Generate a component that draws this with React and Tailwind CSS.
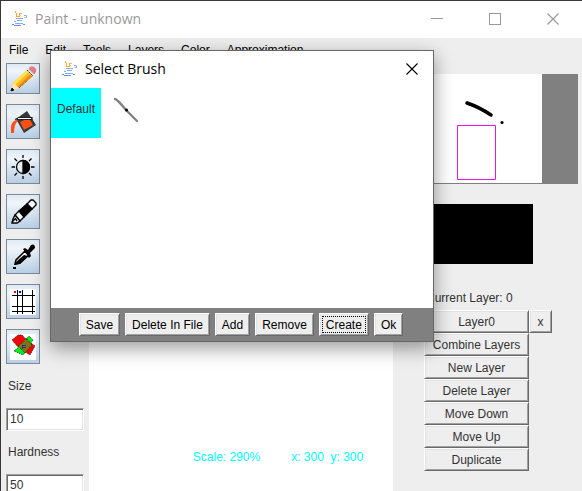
import React from "react";

function JavaIcon() {
  return (
    <svg width="16" height="17" viewBox="0 0 16 17" fill="none" aria-hidden="true">
      <path d="M3.500 1v2M4.500 3v4M7.500 3v3M4 6.500h4" stroke="#ffa53a" />
      <path d="M8 3.500h2M7 5.500h2" stroke="#ffb866" />
      <path d="M4 8.500h7M5 10.500h5M12 5.500h2.500v2h-2M2 11.500h2M3 13.500h8" stroke="#79a4ee" strokeWidth="0.900" />
      <path d="M0 14.500h2M2 15.500h7M11 14.500h2" stroke="#5c92ff" />
    </svg>
  );
}

function CloseGlyph() {
  return (
    <svg width="12" height="12" viewBox="0 0 12 12" stroke="currentColor" strokeWidth="1.1" aria-hidden="true">
      <path d="M.5.5l11 11M11.500.5L.5 11.500" />
    </svg>
  );
}

function Pencil() {
  return (
    <svg width="28" height="28" viewBox="0 0 28 28" aria-hidden="true">
      <path d="M2 26l2-8L18 5l5 5L10 23z" fill="#ffb51f" />
      <path d="M4 18L18 5l2 2L6 20z" fill="#ffe34f" />
      <path d="M8 22L22 9l2 2-14 12z" fill="#ed8a09" />
      <path d="M2 26l2-8 3 2 3 3z" fill="#ffe3b5" />
      <path d="M2 26l1-3 2 2z" fill="#111" stroke="#111" />
      <path d="M17 5l4-3 5 5-3 4z" fill="#ddd" />
      <path d="M18 5l6 6M20 3l6 6" stroke="#3c3540" strokeWidth="1" strokeDasharray="2 1" />
      <path d="M20 3q2-3 5-1t2 5l-2 2-5-5z" fill="#e97b84" />
      <path d="M10 23L19 15" stroke="#704d12" strokeDasharray="1 1" />
    </svg>
  );
}

function Bucket() {
  return (
    <svg width="28" height="28" viewBox="0 0 28 28" aria-hidden="true">
      <path d="M3 6h3V4h3M3 3v3" stroke="#e8edf2" strokeWidth="2" fill="none" />
      <path d="M7 11L18 3l9 14-12 8z" fill="#363839" />
      <path d="M11 14l9-4 4 7-9 5z" fill="#ff4f16" />
      <path d="M2 25v-7q1-5 7-7l-1 3q-3 3-3 11z" fill="#ff4f16" />
      <path d="M6 11.500l4-2h13v2H8" stroke="#222" strokeWidth="1.200" fill="none" />
      <path d="M9 10.500h13" stroke="#fff" />
    </svg>
  );
}

function Contrast() {
  return (
    <svg width="28" height="28" viewBox="0 0 28 28" fill="none" stroke="#000" strokeWidth="1.300" aria-hidden="true">
      <circle cx="14" cy="14" r="6.500" fill="#e3edf6" />
      <path d="M14 7.500a6.500 6.500 0 0 1 0 13z" fill="#000" />
      <path d="M14 2v3M14 23v3M2.500 14H6M22 14h3.500M5.500 5.500l2.500 2.500M20 20l2.500 2.500M22.500 5.500L20 8M8 20l-2.500 2.500" />
    </svg>
  );
}

function Marker() {
  return (
    <svg width="28" height="28" viewBox="0 0 28 28" stroke="#000" strokeWidth="1.400" aria-hidden="true">
      <path d="M18 6l4-4h2l3 3v2l-4 4z" fill="#f4f8fc" />
      <path d="M10 13l8-7 5 5-8 8z" />
      <path d="M6 17l4-4 5 6-4 4z" fill="#f4f8fc" />
      <path d="M6 17l5 6-3 2H3l1-4z" fill="#f4f8fc" />
      <path d="M6 20l2 3M3 24l3-3" fill="none" />
    </svg>
  );
}

function Dropper() {
  return (
    <svg width="28" height="28" viewBox="0 0 28 28" aria-hidden="true">
      <path d="M6 21l1-4L16 8l4 4-9 8z" fill="#f5f8fb" stroke="#000" strokeWidth="1.500" />
      <path d="M8 18L15 12l4 1-8 8-6 1z" />
      <path d="M14 6l2-1 3 2 3-5q4-2 4 3l-5 5 1 3-2 2z" />
      <path d="M4 24h3v2H4z" />
    </svg>
  );
}

function GridIcon() {
  return (
    <svg width="26" height="26" viewBox="0 0 26 26" aria-hidden="true">
      <path d="M0 0h26v26H0z" fill="#fff" />
      <path d="M7.500 1v24M12.500 1v24M22.500 1v24M2 6.500h23M2 17.500h23M2 22.500h23" stroke="#000" />
      <path d="M4 2h2v2H4z" fill="#e00000" />
      <path d="M9 2h2v2H9z" fill="#00f" />
    </svg>
  );
}

function ShapesIcon() {
  return (
    <svg width="26" height="26" viewBox="0 0 26 26" strokeWidth="0.800" aria-hidden="true">
      <path d="M0 0h26v26H0z" fill="#fff" />
      <path d="M16 5l3-3 4 4-3 4z" fill="#00ed20" stroke="#111" strokeDasharray="1 1" />
      <path d="M4 17l6-5 6 5-3 4z" fill="#00ed20" stroke="#111" strokeDasharray="1 1" />
      <path d="M2 6l6-5h4l4 4-8 8z" fill="#f00808" stroke="#111" strokeDasharray="1 1" />
      <path d="M21 9l4 3-5 9-5-3z" fill="#f00808" stroke="#111" strokeDasharray="1 1" />
      <path d="M8 12l9-7 5 6-7 8z" fill="#80740c" stroke="#111" strokeDasharray="1 1" />
      <path d="M12 11.500h4M12.500 11v4M13 13.500h3" stroke="#1717be" />
    </svg>
  );
}

const tools = [
  ["Pencil", Pencil],
  ["Fill", Bucket],
  ["Contrast", Contrast],
  ["Marker", Marker],
  ["Color picker", Dropper],
  ["Grid", GridIcon],
  ["Shapes", ShapesIcon],
];

const bevel =
  "h-[23px] whitespace-nowrap border border-t-white border-l-white border-b-[#696969] border-r-[#696969] bg-[#eee] shadow-[inset_1px_1px_0_#e3e3e3,inset_-1px_-1px_0_#a0a0a0]";

function Field({ id, label, value }) {
  return (
    <div className="flex flex-col gap-3">
      <label htmlFor={id} className="pl-0.5 leading-5">{label}</label>
      <input
        id={id}
        defaultValue={value}
        className="h-[23px] w-[78px] border border-t-[#a0a0a0] border-l-[#a0a0a0] border-b-white border-r-white bg-white pb-0.5 pl-[3px] shadow-[inset_1px_1px_0_#696969,inset_-1px_-1px_0_#e3e3e3] outline-none"
      />
    </div>
  );
}

function SelectBrush() {
  return (
    <section
      role="dialog"
      aria-label="Select Brush"
      className="absolute top-[49px] left-[49px] flex h-[292px] w-[384px] flex-col border border-[#666] bg-white text-black shadow-[0_6px_18px_rgba(0,0,0,0.4)]"
    >
      <header className="flex h-[37px] shrink-0 items-center pr-[15px] pb-0.5 pl-[11px]">
        <JavaIcon />
        <h2 className="ml-[7px] flex-1 font-['Open_Sans',sans-serif] text-[14px]">Select Brush</h2>
        <button type="button" aria-label="Close">
          <CloseGlyph />
        </button>
      </header>
      <div className="flex flex-1">
        <button type="button" className="flex h-[50px] w-[50px] items-center justify-center bg-[#0ff] pb-2 text-[#333]">
          Default
        </button>
        <button type="button" aria-label="Brush stroke" className="h-[50px] w-[50px]">
          <svg width="50" height="50" viewBox="0 0 50 50">
            <path d="M14 11q2 0 11 11 5 5 11 11" stroke="#808080" strokeWidth="2.300" fill="none" strokeLinecap="round" />
            <circle cx="25.500" cy="22" r="1.500" />
          </svg>
        </button>
      </div>
      <footer className="flex h-[33px] shrink-0 items-center justify-center gap-[5px] bg-[#808080] pr-0.5">
        {["Save", "Delete In File", "Add", "Remove", "Create", "Ok"].map((name) => (
          <button
            key={name}
            type="button"
            className={`${bevel} px-1.5 ${name === "Create" ? "relative after:absolute after:inset-0.5 after:border after:border-dotted after:border-black" : ""}`}
          >
            {name}
          </button>
        ))}
      </footer>
    </section>
  );
}

export default function App() {
  return (
    <div className="relative flex h-screen flex-col overflow-hidden border-t border-l border-[#3a3638] bg-[#eee] font-['Liberation_Sans',Arial,sans-serif] text-[12px] text-[#333]">
      <header className="flex h-[37px] shrink-0 items-center bg-white pr-[23px] pb-0.5 pl-[11px] text-[#999]">
        <JavaIcon />
        <h1 className="ml-[7px] flex-1 font-['Open_Sans',sans-serif] text-[14px]">Paint - unknown</h1>
        <div className="flex items-center gap-[46px]">
          <button type="button" aria-label="Minimize" className="flex h-3 w-3 items-center">
            <span className="h-px w-full bg-[#999]" />
          </button>
          <button type="button" aria-label="Maximize" className="h-3 w-3 border border-[#999]" />
          <button type="button" aria-label="Close">
            <CloseGlyph />
          </button>
        </div>
      </header>
      <nav className="flex h-[25px] shrink-0 items-center gap-[17px] pb-0.5 pl-2 text-black">
        {["File", "Edit", "Tools", "Layers", "Color", "Approximation"].map((name) => (
          <button key={name} type="button">{name}</button>
        ))}
      </nav>
      <div className="flex min-h-0 flex-1">
        <aside className="flex w-[88px] shrink-0 flex-col pl-[5px]">
          <div className="flex flex-col gap-[10px]">
            {tools.map(([name, Icon]) => (
              <button
                key={name}
                type="button"
                aria-label={name}
                className="flex h-[35px] w-[34px] items-center justify-center border border-[#7a8a99] bg-linear-to-b from-[#dfeaf4] via-[#f0f5fa] via-25% to-[#b8cfe5] first:h-[31px]"
              >
                <Icon />
              </button>
            ))}
          </div>
          <div className="mt-3 flex flex-col gap-[11px]">
            <Field id="size" label="Size" value="10" />
            <Field id="hardness" label="Hardness" value="50" />
          </div>
        </aside>
        <main className="flex min-w-0 flex-1 justify-center gap-[31px] bg-white pt-[385px] pl-[74px] text-[#0ff]">
          <span>Scale: 290%</span>
          <span className="whitespace-pre">x: 300  y: 300</span>
        </main>
        <aside className="flex w-[189px] shrink-0 flex-col pt-[11px] pr-1 pl-[31px]">
          <div className="flex h-[110px] border-b border-[#808080] bg-[#808080]">
            <svg className="w-[118px] bg-white" height="109" viewBox="0 0 118 109">
              <path d="M43 29q12 4 24 12" stroke="#000" strokeWidth="3.500" fill="none" strokeLinecap="round" />
              <circle cx="78" cy="48.500" r="1.600" />
              <path d="M33.500 51.500h38v54h-38z" fill="none" stroke="#e815e8" />
            </svg>
          </div>
          <div className="mt-5 h-[60px] w-[109px] bg-black" />
          <p className="mt-6 mb-0.5 pl-0.5 leading-5">Current Layer: 0</p>
          <div className="flex">
            <button type="button" className={`${bevel} w-[105px]`}>Layer0</button>
            <button type="button" aria-label="Remove Layer0" className={`${bevel} w-[23px]`}>x</button>
          </div>
          {["Combine Layers", "New Layer", "Delete Layer", "Move Down", "Move Up", "Duplicate"].map((name) => (
            <button key={name} type="button" className={`${bevel} w-[105px]`}>{name}</button>
          ))}
        </aside>
      </div>
      <SelectBrush />
    </div>
  );
}
